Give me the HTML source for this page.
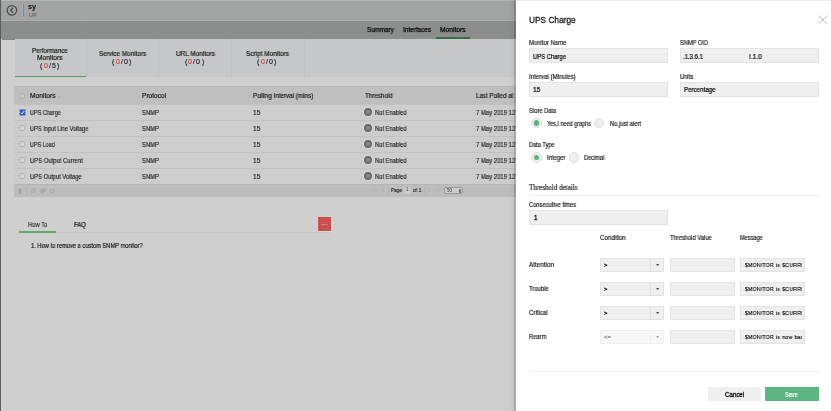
<!DOCTYPE html>
<html><head><meta charset="utf-8">
<style>
*{box-sizing:border-box;margin:0;padding:0}
html,body{width:831px;height:411px;overflow:hidden;background:#cfcfcf;font-family:"Liberation Sans",sans-serif}
.a{position:absolute}
.t{position:absolute;white-space:nowrap;will-change:transform}
</style></head><body>
<div class="a" style="left:0px;top:0px;width:516px;height:411px;background:#cfcfcf;"></div>
<div class="a" style="left:0px;top:0px;width:516px;height:20.5px;background:#a2a4a3;"></div>
<div class="a" style="left:0px;top:0px;width:516px;height:1px;background:#b3b5b4;"></div>
<div class="a" style="left:0px;top:19.6px;width:516px;height:0.9px;background:#acaead;"></div>
<div class="a" style="left:0px;top:20.5px;width:516px;height:18.5px;background:#8c8e8d;"></div>
<div class="a" style="left:0px;top:38.5px;width:516px;height:0.5px;background:#858786;"></div>
<div class="a" style="left:0px;top:0px;width:1px;height:411px;background:#5a5a5a;"></div>
<div class="a" style="left:1px;top:39px;width:1px;height:372px;background:#d9d9d9;"></div>
<svg class="a" style="left:4.5px;top:4px" width="14" height="13" viewBox="0 0 14 13"><circle cx="6.9" cy="6.3" r="5.8" fill="none" stroke="#b4b6b5" stroke-width="0.6"/><circle cx="6.9" cy="6.3" r="4.8" fill="none" stroke="#4a4a4a" stroke-width="1.25"/><path d="M8 3.8 L5.5 6.3 L8 8.8" fill="none" stroke="#4a4a4a" stroke-width="1.25"/></svg>
<div class="a" style="left:21.8px;top:3.5px;width:2.6px;height:14.5px;background:#aab4bc;"></div>
<div class="a" style="left:22.5px;top:4px;width:1.3px;height:13.3px;background:#c17a30;"></div>
<div class="t" style="left:28.4px;top:1.00px;font-size:6.9px;line-height:12px;color:#080808;font-family:'Liberation Sans',sans-serif;font-weight:bold;transform:scaleX(1.0500);transform-origin:0 50%;">sy</div>
<div class="t" style="left:28.6px;top:8.80px;font-size:5.8px;line-height:12px;color:#5a5a5a;font-family:'Liberation Sans',sans-serif;font-weight:normal;-webkit-text-stroke:0.05px #5a5a5a;transform:scaleX(0.9302);transform-origin:0 50%;">UP</div>
<div class="a" style="left:38px;top:17.3px;width:46px;height:0;border-top:0.6px dotted #aaacab"></div>
<div class="t" style="left:367.4px;top:23.80px;font-size:6.6px;line-height:12px;color:#0a0a0a;font-family:'Liberation Sans',sans-serif;font-weight:normal;-webkit-text-stroke:0.25px #0a0a0a;transform:scaleX(0.9426);transform-origin:0 50%;">Summary</div>
<div class="t" style="left:402.8px;top:23.80px;font-size:6.6px;line-height:12px;color:#0a0a0a;font-family:'Liberation Sans',sans-serif;font-weight:normal;-webkit-text-stroke:0.25px #0a0a0a;transform:scaleX(0.9666);transform-origin:0 50%;">Interfaces</div>
<div class="t" style="left:440px;top:23.80px;font-size:6.6px;line-height:12px;color:#0a0a0a;font-family:'Liberation Sans',sans-serif;font-weight:normal;-webkit-text-stroke:0.25px #0a0a0a;transform:scaleX(1.0080);transform-origin:0 50%;">Monitors</div>
<div class="a" style="left:435.5px;top:37.4px;width:34.5px;height:1.2px;background:#3a6c45;"></div>
<div class="a" style="left:14.5px;top:39px;width:501.5px;height:38px;background:#c6c7c8;"></div>
<div class="a" style="left:86px;top:39px;width:0.8px;height:38px;background:#c0c0c0;"></div>
<div class="a" style="left:158.4px;top:39px;width:0.8px;height:38px;background:#c0c0c0;"></div>
<div class="a" style="left:231px;top:39px;width:0.8px;height:38px;background:#c0c0c0;"></div>
<div class="a" style="left:303.5px;top:39px;width:0.8px;height:38px;background:#c0c0c0;"></div>
<div class="a" style="left:14.5px;top:75.9px;width:71.5px;height:1.4px;background:#5c9d6c;"></div>
<div class="a" style="left:14.5px;top:77.3px;width:71.5px;height:0.5px;background:#d2c6c6;"></div>
<div class="t" style="left:32.1px;top:44.50px;font-size:6.7px;line-height:12px;color:#161616;font-family:'Liberation Sans',sans-serif;font-weight:normal;-webkit-text-stroke:0.18px #161616;transform:scaleX(0.9348);transform-origin:0 50%;">Performance</div>
<div class="t" style="left:37.2px;top:51.90px;font-size:6.7px;line-height:12px;color:#161616;font-family:'Liberation Sans',sans-serif;font-weight:normal;-webkit-text-stroke:0.18px #161616;transform:scaleX(0.9939);transform-origin:0 50%;">Monitors</div>
<div class="t" style="left:40.25px;top:59.60px;font-size:7.0px;line-height:12px;color:#161616;font-family:'Liberation Sans',sans-serif;font-weight:normal;-webkit-text-stroke:0.12px #161616;">(</div>
<div class="t" style="left:43.55px;top:59.60px;font-size:7.0px;line-height:12px;color:#d23a2e;font-family:'Liberation Sans',sans-serif;font-weight:normal;-webkit-text-stroke:0.12px #d23a2e;">0</div>
<div class="t" style="left:48.65px;top:59.60px;font-size:7.0px;line-height:12px;color:#161616;font-family:'Liberation Sans',sans-serif;font-weight:normal;-webkit-text-stroke:0.12px #161616;">/</div>
<div class="t" style="left:51.75px;top:59.60px;font-size:7.0px;line-height:12px;color:#161616;font-family:'Liberation Sans',sans-serif;font-weight:normal;-webkit-text-stroke:0.12px #161616;">5</div>
<div class="t" style="left:56.949999999999996px;top:59.60px;font-size:7.0px;line-height:12px;color:#161616;font-family:'Liberation Sans',sans-serif;font-weight:normal;-webkit-text-stroke:0.12px #161616;">)</div>
<div class="t" style="left:98.7px;top:48.10px;font-size:6.7px;line-height:12px;color:#161616;font-family:'Liberation Sans',sans-serif;font-weight:normal;-webkit-text-stroke:0.18px #161616;transform:scaleX(0.9455);transform-origin:0 50%;">Service Monitors</div>
<div class="t" style="left:112.39999999999999px;top:55.80px;font-size:7.0px;line-height:12px;color:#161616;font-family:'Liberation Sans',sans-serif;font-weight:normal;-webkit-text-stroke:0.12px #161616;">(</div>
<div class="t" style="left:115.7px;top:55.80px;font-size:7.0px;line-height:12px;color:#d23a2e;font-family:'Liberation Sans',sans-serif;font-weight:normal;-webkit-text-stroke:0.12px #d23a2e;">0</div>
<div class="t" style="left:120.8px;top:55.80px;font-size:7.0px;line-height:12px;color:#161616;font-family:'Liberation Sans',sans-serif;font-weight:normal;-webkit-text-stroke:0.12px #161616;">/</div>
<div class="t" style="left:123.89999999999999px;top:55.80px;font-size:7.0px;line-height:12px;color:#161616;font-family:'Liberation Sans',sans-serif;font-weight:normal;-webkit-text-stroke:0.12px #161616;">0</div>
<div class="t" style="left:129.1px;top:55.80px;font-size:7.0px;line-height:12px;color:#161616;font-family:'Liberation Sans',sans-serif;font-weight:normal;-webkit-text-stroke:0.12px #161616;">)</div>
<div class="t" style="left:175.7px;top:48.30px;font-size:6.7px;line-height:12px;color:#161616;font-family:'Liberation Sans',sans-serif;font-weight:normal;-webkit-text-stroke:0.18px #161616;transform:scaleX(0.9596);transform-origin:0 50%;">URL Monitors</div>
<div class="t" style="left:184.95px;top:55.80px;font-size:7.0px;line-height:12px;color:#161616;font-family:'Liberation Sans',sans-serif;font-weight:normal;-webkit-text-stroke:0.12px #161616;">(</div>
<div class="t" style="left:188.25px;top:55.80px;font-size:7.0px;line-height:12px;color:#d23a2e;font-family:'Liberation Sans',sans-serif;font-weight:normal;-webkit-text-stroke:0.12px #d23a2e;">0</div>
<div class="t" style="left:193.35px;top:55.80px;font-size:7.0px;line-height:12px;color:#161616;font-family:'Liberation Sans',sans-serif;font-weight:normal;-webkit-text-stroke:0.12px #161616;">/</div>
<div class="t" style="left:196.45px;top:55.80px;font-size:7.0px;line-height:12px;color:#161616;font-family:'Liberation Sans',sans-serif;font-weight:normal;-webkit-text-stroke:0.12px #161616;">0</div>
<div class="t" style="left:201.65px;top:55.80px;font-size:7.0px;line-height:12px;color:#161616;font-family:'Liberation Sans',sans-serif;font-weight:normal;-webkit-text-stroke:0.12px #161616;">)</div>
<div class="t" style="left:246px;top:48.30px;font-size:6.7px;line-height:12px;color:#161616;font-family:'Liberation Sans',sans-serif;font-weight:normal;-webkit-text-stroke:0.18px #161616;transform:scaleX(0.9639);transform-origin:0 50%;">Script Monitors</div>
<div class="t" style="left:257.35px;top:55.80px;font-size:7.0px;line-height:12px;color:#161616;font-family:'Liberation Sans',sans-serif;font-weight:normal;-webkit-text-stroke:0.12px #161616;">(</div>
<div class="t" style="left:260.65px;top:55.80px;font-size:7.0px;line-height:12px;color:#d23a2e;font-family:'Liberation Sans',sans-serif;font-weight:normal;-webkit-text-stroke:0.12px #d23a2e;">0</div>
<div class="t" style="left:265.75px;top:55.80px;font-size:7.0px;line-height:12px;color:#161616;font-family:'Liberation Sans',sans-serif;font-weight:normal;-webkit-text-stroke:0.12px #161616;">/</div>
<div class="t" style="left:268.85px;top:55.80px;font-size:7.0px;line-height:12px;color:#161616;font-family:'Liberation Sans',sans-serif;font-weight:normal;-webkit-text-stroke:0.12px #161616;">0</div>
<div class="t" style="left:274.05px;top:55.80px;font-size:7.0px;line-height:12px;color:#161616;font-family:'Liberation Sans',sans-serif;font-weight:normal;-webkit-text-stroke:0.12px #161616;">)</div>
<div class="a" style="left:14px;top:86px;width:502px;height:18.2px;background:#bfbfbf;"></div>
<div class="a" style="left:14px;top:85.6px;width:502px;height:0.9px;background:#b8b8b8;"></div>
<div class="a" style="left:14px;top:103.6px;width:502px;height:0.8px;background:#b9b9b9;"></div>
<div class="a" style="left:19.2px;top:93.3px;width:5.8px;height:5.8px;border-radius:2px;background:#c6c6c6;border:0.7px solid #b0b0b0"></div>
<div class="t" style="left:30.4px;top:89.80px;font-size:6.6px;line-height:12px;color:#161616;font-family:'Liberation Sans',sans-serif;font-weight:normal;-webkit-text-stroke:0.18px #161616;transform:scaleX(1.0120);transform-origin:0 50%;">Monitors</div>
<svg class="a" style="left:58.3px;top:94.6px" width="3" height="3" viewBox="0 0 3 3"><path d="M0.3 2.4 L1.5 0.9 L2.7 2.4Z" fill="#9c9c9c"/></svg>
<div class="t" style="left:141.8px;top:89.60px;font-size:6.6px;line-height:12px;color:#161616;font-family:'Liberation Sans',sans-serif;font-weight:normal;-webkit-text-stroke:0.18px #161616;transform:scaleX(0.9957);transform-origin:0 50%;">Protocol</div>
<div class="t" style="left:252.9px;top:89.60px;font-size:6.6px;line-height:12px;color:#161616;font-family:'Liberation Sans',sans-serif;font-weight:normal;-webkit-text-stroke:0.18px #161616;transform:scaleX(0.9494);transform-origin:0 50%;">Polling Interval (mins)</div>
<div class="t" style="left:364.5px;top:89.60px;font-size:6.6px;line-height:12px;color:#161616;font-family:'Liberation Sans',sans-serif;font-weight:normal;-webkit-text-stroke:0.18px #161616;transform:scaleX(0.9411);transform-origin:0 50%;">Threshold</div>
<div class="t" style="left:475.6px;top:89.60px;font-size:6.6px;line-height:12px;color:#161616;font-family:'Liberation Sans',sans-serif;font-weight:normal;-webkit-text-stroke:0.18px #161616;transform:scaleX(0.9357);transform-origin:0 50%;">Last Polled at</div>
<div class="a" style="left:14px;top:104.2px;width:502px;height:16px;background:#cdcdcd;"></div>
<div class="a" style="left:14px;top:104.2px;width:502px;height:0.8px;background:#c2c2c2;"></div>
<svg class="a" style="left:18.6px;top:109.3px" width="7" height="7" viewBox="0 0 7 7"><rect x="0.35" y="0.35" width="6.3" height="6.3" rx="1.2" fill="#2d5cc2" stroke="#cdbf98" stroke-width="0.5"/><path d="M1.7 3.5 L3 4.8 L5.3 2" fill="none" stroke="#fff" stroke-width="0.9"/></svg>
<div class="t" style="left:30.4px;top:106.50px;font-size:6.6px;line-height:12px;color:#161616;font-family:'Liberation Sans',sans-serif;font-weight:normal;-webkit-text-stroke:0.12px #161616;transform:scaleX(0.8317);transform-origin:0 50%;">UPS Charge</div>
<div class="t" style="left:141.8px;top:106.50px;font-size:6.6px;line-height:12px;color:#161616;font-family:'Liberation Sans',sans-serif;font-weight:normal;-webkit-text-stroke:0.12px #161616;transform:scaleX(0.8813);transform-origin:0 50%;">SNMP</div>
<div class="t" style="left:252.9px;top:106.50px;font-size:6.6px;line-height:12px;color:#161616;font-family:'Liberation Sans',sans-serif;font-weight:normal;-webkit-text-stroke:0.12px #161616;transform:scaleX(0.9940);transform-origin:0 50%;">15</div>
<svg class="a" style="left:363.2px;top:107.2px" width="10" height="10" viewBox="0 0 10 10"><circle cx="5" cy="5" r="4.9" fill="#dedede" opacity="0.6"/><circle cx="5" cy="5" r="3.9" fill="#5e5e5e"/><circle cx="5" cy="5" r="2.6" fill="#8e8e8e"/><circle cx="5" cy="5" r="1.9" fill="none" stroke="#6a6a6a" stroke-width="0.7"/><circle cx="5" cy="5" r="0.8" fill="#999"/></svg>
<div class="t" style="left:374.5px;top:106.50px;font-size:6.6px;line-height:12px;color:#161616;font-family:'Liberation Sans',sans-serif;font-weight:normal;-webkit-text-stroke:0.12px #161616;transform:scaleX(0.8706);transform-origin:0 50%;">Not Enabled</div>
<div class="t" style="left:475.6px;top:106.50px;font-size:6.6px;line-height:12px;color:#161616;font-family:'Liberation Sans',sans-serif;font-weight:normal;-webkit-text-stroke:0.12px #161616;transform:scaleX(0.9000);transform-origin:0 50%;">7 May 2019 12:38 PM</div>
<div class="a" style="left:14px;top:120.2px;width:502px;height:16px;background:#cdcdcd;"></div>
<div class="a" style="left:14px;top:120.2px;width:502px;height:0.8px;background:#c2c2c2;"></div>
<div class="a" style="left:18.9px;top:125.3px;width:6.2px;height:6.2px;border-radius:1.4px;background:#d3d3d3;border:0.8px solid #b4b4b4"></div>
<div class="t" style="left:30.4px;top:122.50px;font-size:6.6px;line-height:12px;color:#161616;font-family:'Liberation Sans',sans-serif;font-weight:normal;-webkit-text-stroke:0.12px #161616;transform:scaleX(0.8565);transform-origin:0 50%;">UPS Input Line Voltage</div>
<div class="t" style="left:141.8px;top:122.50px;font-size:6.6px;line-height:12px;color:#161616;font-family:'Liberation Sans',sans-serif;font-weight:normal;-webkit-text-stroke:0.12px #161616;transform:scaleX(0.8813);transform-origin:0 50%;">SNMP</div>
<div class="t" style="left:252.9px;top:122.50px;font-size:6.6px;line-height:12px;color:#161616;font-family:'Liberation Sans',sans-serif;font-weight:normal;-webkit-text-stroke:0.12px #161616;transform:scaleX(0.9940);transform-origin:0 50%;">15</div>
<svg class="a" style="left:363.2px;top:123.2px" width="10" height="10" viewBox="0 0 10 10"><circle cx="5" cy="5" r="4.9" fill="#dedede" opacity="0.6"/><circle cx="5" cy="5" r="3.9" fill="#5e5e5e"/><circle cx="5" cy="5" r="2.6" fill="#8e8e8e"/><circle cx="5" cy="5" r="1.9" fill="none" stroke="#6a6a6a" stroke-width="0.7"/><circle cx="5" cy="5" r="0.8" fill="#999"/></svg>
<div class="t" style="left:374.5px;top:122.50px;font-size:6.6px;line-height:12px;color:#161616;font-family:'Liberation Sans',sans-serif;font-weight:normal;-webkit-text-stroke:0.12px #161616;transform:scaleX(0.8706);transform-origin:0 50%;">Not Enabled</div>
<div class="t" style="left:475.6px;top:122.50px;font-size:6.6px;line-height:12px;color:#161616;font-family:'Liberation Sans',sans-serif;font-weight:normal;-webkit-text-stroke:0.12px #161616;transform:scaleX(0.9000);transform-origin:0 50%;">7 May 2019 12:38 PM</div>
<div class="a" style="left:14px;top:136.2px;width:502px;height:16px;background:#cdcdcd;"></div>
<div class="a" style="left:14px;top:136.2px;width:502px;height:0.8px;background:#c2c2c2;"></div>
<div class="a" style="left:18.9px;top:141.29999999999998px;width:6.2px;height:6.2px;border-radius:1.4px;background:#d3d3d3;border:0.8px solid #b4b4b4"></div>
<div class="t" style="left:30.4px;top:138.50px;font-size:6.6px;line-height:12px;color:#161616;font-family:'Liberation Sans',sans-serif;font-weight:normal;-webkit-text-stroke:0.12px #161616;transform:scaleX(0.8216);transform-origin:0 50%;">UPS Load</div>
<div class="t" style="left:141.8px;top:138.50px;font-size:6.6px;line-height:12px;color:#161616;font-family:'Liberation Sans',sans-serif;font-weight:normal;-webkit-text-stroke:0.12px #161616;transform:scaleX(0.8813);transform-origin:0 50%;">SNMP</div>
<div class="t" style="left:252.9px;top:138.50px;font-size:6.6px;line-height:12px;color:#161616;font-family:'Liberation Sans',sans-serif;font-weight:normal;-webkit-text-stroke:0.12px #161616;transform:scaleX(0.9940);transform-origin:0 50%;">15</div>
<svg class="a" style="left:363.2px;top:139.2px" width="10" height="10" viewBox="0 0 10 10"><circle cx="5" cy="5" r="4.9" fill="#dedede" opacity="0.6"/><circle cx="5" cy="5" r="3.9" fill="#5e5e5e"/><circle cx="5" cy="5" r="2.6" fill="#8e8e8e"/><circle cx="5" cy="5" r="1.9" fill="none" stroke="#6a6a6a" stroke-width="0.7"/><circle cx="5" cy="5" r="0.8" fill="#999"/></svg>
<div class="t" style="left:374.5px;top:138.50px;font-size:6.6px;line-height:12px;color:#161616;font-family:'Liberation Sans',sans-serif;font-weight:normal;-webkit-text-stroke:0.12px #161616;transform:scaleX(0.8706);transform-origin:0 50%;">Not Enabled</div>
<div class="t" style="left:475.6px;top:138.50px;font-size:6.6px;line-height:12px;color:#161616;font-family:'Liberation Sans',sans-serif;font-weight:normal;-webkit-text-stroke:0.12px #161616;transform:scaleX(0.9000);transform-origin:0 50%;">7 May 2019 12:38 PM</div>
<div class="a" style="left:14px;top:152.2px;width:502px;height:16px;background:#cdcdcd;"></div>
<div class="a" style="left:14px;top:152.2px;width:502px;height:0.8px;background:#c2c2c2;"></div>
<div class="a" style="left:18.9px;top:157.29999999999998px;width:6.2px;height:6.2px;border-radius:1.4px;background:#d3d3d3;border:0.8px solid #b4b4b4"></div>
<div class="t" style="left:30.4px;top:154.50px;font-size:6.6px;line-height:12px;color:#161616;font-family:'Liberation Sans',sans-serif;font-weight:normal;-webkit-text-stroke:0.12px #161616;transform:scaleX(0.8930);transform-origin:0 50%;">UPS Output Current</div>
<div class="t" style="left:141.8px;top:154.50px;font-size:6.6px;line-height:12px;color:#161616;font-family:'Liberation Sans',sans-serif;font-weight:normal;-webkit-text-stroke:0.12px #161616;transform:scaleX(0.8813);transform-origin:0 50%;">SNMP</div>
<div class="t" style="left:252.9px;top:154.50px;font-size:6.6px;line-height:12px;color:#161616;font-family:'Liberation Sans',sans-serif;font-weight:normal;-webkit-text-stroke:0.12px #161616;transform:scaleX(0.9940);transform-origin:0 50%;">15</div>
<svg class="a" style="left:363.2px;top:155.2px" width="10" height="10" viewBox="0 0 10 10"><circle cx="5" cy="5" r="4.9" fill="#dedede" opacity="0.6"/><circle cx="5" cy="5" r="3.9" fill="#5e5e5e"/><circle cx="5" cy="5" r="2.6" fill="#8e8e8e"/><circle cx="5" cy="5" r="1.9" fill="none" stroke="#6a6a6a" stroke-width="0.7"/><circle cx="5" cy="5" r="0.8" fill="#999"/></svg>
<div class="t" style="left:374.5px;top:154.50px;font-size:6.6px;line-height:12px;color:#161616;font-family:'Liberation Sans',sans-serif;font-weight:normal;-webkit-text-stroke:0.12px #161616;transform:scaleX(0.8706);transform-origin:0 50%;">Not Enabled</div>
<div class="t" style="left:475.6px;top:154.50px;font-size:6.6px;line-height:12px;color:#161616;font-family:'Liberation Sans',sans-serif;font-weight:normal;-webkit-text-stroke:0.12px #161616;transform:scaleX(0.9000);transform-origin:0 50%;">7 May 2019 12:38 PM</div>
<div class="a" style="left:14px;top:168.2px;width:502px;height:16px;background:#cdcdcd;"></div>
<div class="a" style="left:14px;top:168.2px;width:502px;height:0.8px;background:#c2c2c2;"></div>
<div class="a" style="left:18.9px;top:173.29999999999998px;width:6.2px;height:6.2px;border-radius:1.4px;background:#d3d3d3;border:0.8px solid #b4b4b4"></div>
<div class="t" style="left:30.4px;top:170.50px;font-size:6.6px;line-height:12px;color:#161616;font-family:'Liberation Sans',sans-serif;font-weight:normal;-webkit-text-stroke:0.12px #161616;transform:scaleX(0.8760);transform-origin:0 50%;">UPS Output Voltage</div>
<div class="t" style="left:141.8px;top:170.50px;font-size:6.6px;line-height:12px;color:#161616;font-family:'Liberation Sans',sans-serif;font-weight:normal;-webkit-text-stroke:0.12px #161616;transform:scaleX(0.8813);transform-origin:0 50%;">SNMP</div>
<div class="t" style="left:252.9px;top:170.50px;font-size:6.6px;line-height:12px;color:#161616;font-family:'Liberation Sans',sans-serif;font-weight:normal;-webkit-text-stroke:0.12px #161616;transform:scaleX(0.9940);transform-origin:0 50%;">15</div>
<svg class="a" style="left:363.2px;top:171.2px" width="10" height="10" viewBox="0 0 10 10"><circle cx="5" cy="5" r="4.9" fill="#dedede" opacity="0.6"/><circle cx="5" cy="5" r="3.9" fill="#5e5e5e"/><circle cx="5" cy="5" r="2.6" fill="#8e8e8e"/><circle cx="5" cy="5" r="1.9" fill="none" stroke="#6a6a6a" stroke-width="0.7"/><circle cx="5" cy="5" r="0.8" fill="#999"/></svg>
<div class="t" style="left:374.5px;top:170.50px;font-size:6.6px;line-height:12px;color:#161616;font-family:'Liberation Sans',sans-serif;font-weight:normal;-webkit-text-stroke:0.12px #161616;transform:scaleX(0.8706);transform-origin:0 50%;">Not Enabled</div>
<div class="t" style="left:475.6px;top:170.50px;font-size:6.6px;line-height:12px;color:#161616;font-family:'Liberation Sans',sans-serif;font-weight:normal;-webkit-text-stroke:0.12px #161616;transform:scaleX(0.9000);transform-origin:0 50%;">7 May 2019 12:38 PM</div>
<div class="a" style="left:14px;top:184.2px;width:502px;height:13.1px;background:#bdbdbd;"></div>
<div class="a" style="left:14px;top:184.2px;width:502px;height:0.6px;background:#b6b6b6;"></div>
<svg class="a" style="left:14px;top:184px" width="45" height="14" viewBox="0 0 45 14"><rect x="4.6" y="4.4" width="3" height="5.6" rx="1.2" fill="#a6a6a6"/><line x1="12.6" y1="2.5" x2="12.6" y2="11.5" stroke="#b2b2b2" stroke-width="0.5"/><g fill="none" stroke="#a3a3a3" stroke-width="1"><circle cx="19.6" cy="6.6" r="1.8"/><line x1="18.3" y1="8" x2="16.8" y2="9.6"/><circle cx="28" cy="7.6" r="1.6"/><circle cx="29.6" cy="6.4" r="1.6"/><circle cx="38.5" cy="7" r="1.9"/></g></svg>
<svg class="a" style="left:372px;top:187px" width="70" height="7" viewBox="0 0 70 7"><g fill="none" stroke="#ababab" stroke-width="0.6"><path d="M2 1.8 V5.2 M4.6 1.8 L3 3.5 L4.6 5.2"/><path d="M11.2 1.8 L9.6 3.5 L11.2 5.2 M13.2 1.8 L11.6 3.5 L13.2 5.2"/><path d="M55 1.8 L56.6 3.5 L55 5.2 M57 1.8 L58.6 3.5 L57 5.2"/><path d="M64.4 1.8 L66 3.5 L64.4 5.2 M67.4 1.8 V5.2"/></g></svg>
<div class="a" style="left:388px;top:186.5px;width:0.6px;height:8px;background:#b4b4b4;"></div>
<div class="t" style="left:390.8px;top:184.40px;font-size:5.8px;line-height:12px;color:#1e1e1e;font-family:'Liberation Sans',sans-serif;font-weight:normal;-webkit-text-stroke:0.1px #1e1e1e;transform:scaleX(0.8268);transform-origin:0 50%;">Page</div>
<div class="a" style="left:403.6px;top:187.2px;width:7.2px;height:6.6px;border-radius:1px;background:#cbcbcb"></div>
<div class="t" style="left:406.3px;top:184.40px;font-size:4.6px;line-height:12px;color:#4a4a4a;font-family:'Liberation Sans',sans-serif;font-weight:normal;">1</div>
<div class="t" style="left:413px;top:184.40px;font-size:5.8px;line-height:12px;color:#1e1e1e;font-family:'Liberation Sans',sans-serif;font-weight:normal;-webkit-text-stroke:0.1px #1e1e1e;transform:scaleX(0.8582);transform-origin:0 50%;">of 1</div>
<div class="a" style="left:424px;top:186.5px;width:0.6px;height:8px;background:#b4b4b4;"></div>
<div class="a" style="left:443.8px;top:186.6px;width:19px;height:7.8px;border-radius:2px;background:#cdcdcd;border:0.7px solid #9a9a9a"></div>
<div class="t" style="left:446.8px;top:184.50px;font-size:4.6px;line-height:12px;color:#333;font-family:'Liberation Sans',sans-serif;font-weight:normal;">50</div>
<svg class="a" style="left:457.6px;top:187.6px" width="4" height="6" viewBox="0 0 4 6"><path d="M0.7 2.6 L2 1 L3.3 2.6 Z M0.7 3.4 L2 5 L3.3 3.4 Z" fill="#1a1a1a"/></svg>
<div class="a" style="left:14px;top:232.2px;width:317px;height:0.9px;background:#c6c6c6;"></div>
<div class="a" style="left:18.7px;top:231.4px;width:37.6px;height:1.2px;background:#66a575;"></div>
<div class="t" style="left:28px;top:218.50px;font-size:6.4px;line-height:12px;color:#161616;font-family:'Liberation Sans',sans-serif;font-weight:normal;-webkit-text-stroke:0.08px #161616;transform:scaleX(0.9055);transform-origin:0 50%;">How To</div>
<div class="t" style="left:74.2px;top:218.50px;font-size:6.4px;line-height:12px;color:#161616;font-family:'Liberation Sans',sans-serif;font-weight:normal;-webkit-text-stroke:0.22px #161616;transform:scaleX(0.9299);transform-origin:0 50%;">FAQ</div>
<div class="t" style="left:30.8px;top:240.00px;font-size:6.4px;line-height:12px;color:#0e0e0e;font-family:'Liberation Sans',sans-serif;font-weight:normal;-webkit-text-stroke:0.15px #0e0e0e;transform:scaleX(0.8977);transform-origin:0 50%;">1. How to remove a custom SNMP monitor?</div>
<div class="a" style="left:317px;top:216.5px;width:15px;height:15.2px;background:#d2dada;"></div>
<div class="a" style="left:318px;top:217.3px;width:13.2px;height:13.8px;background:#c84f4c;"></div>
<div class="a" style="left:321.2px;top:224.1px;width:6.6px;height:0.7px;background:#d47f7d;"></div>
<div class="a" style="left:508px;top:0;width:6.5px;height:411px;background:linear-gradient(to right,rgba(0,0,0,0),rgba(0,0,0,0.05))"></div>
<div class="a" style="left:514.3px;top:0;width:1.5px;height:411px;background:rgba(0,0,0,0.16)"></div>
<div class="a" style="left:515.6px;top:0px;width:315.5px;height:411px;background:#ffffff;"></div>
<div class="a" style="left:515.6px;top:0px;width:315.5px;height:0.8px;background:#ececec;"></div>
<div class="t" style="left:529.4px;top:14.00px;font-size:9.6px;line-height:12px;color:#111;font-family:'Liberation Sans',sans-serif;font-weight:normal;-webkit-text-stroke:0.3px #111;transform:scaleX(0.8652);transform-origin:0 50%;">UPS Charge</div>
<svg class="a" style="left:817.7px;top:14.8px" width="10" height="9.5" viewBox="0 0 10 9.5"><path d="M0.6 0.5 L9.2 8.9 M9.2 0.5 L0.6 8.9" stroke="#a0a0a0" stroke-width="0.75"/></svg>
<div class="t" style="left:529.2px;top:37.10px;font-size:6.3px;line-height:12px;color:#111111;font-family:'Liberation Sans',sans-serif;font-weight:normal;-webkit-text-stroke:0.15px #111111;transform:scaleX(0.9457);transform-origin:0 50%;">Monitor Name</div>
<div class="a" style="left:529.2px;top:48.2px;width:139.2px;height:15.2px;background:#efefef;border:0.7px solid #e3e3e3"></div>
<div class="t" style="left:533.1px;top:51.00px;font-size:6.8px;line-height:12px;color:#0a0a0a;font-family:'Liberation Sans',sans-serif;font-weight:normal;-webkit-text-stroke:0.22px #0a0a0a;transform:scaleX(0.8649);transform-origin:0 50%;">UPS Charge</div>
<div class="t" style="left:680.2px;top:37.10px;font-size:6.3px;line-height:12px;color:#111111;font-family:'Liberation Sans',sans-serif;font-weight:normal;-webkit-text-stroke:0.15px #111111;transform:scaleX(0.9055);transform-origin:0 50%;">SNMP OID</div>
<div class="a" style="left:680.2px;top:48.3px;width:138.8px;height:14.9px;background:#efefef;border:0.7px solid #e3e3e3"></div>
<div class="t" style="left:683.3px;top:51.00px;font-size:6.8px;line-height:12px;color:#0a0a0a;font-family:'Liberation Sans',sans-serif;font-weight:normal;-webkit-text-stroke:0.22px #0a0a0a;transform:scaleX(0.8771);transform-origin:0 50%;">.1.3.6.1</div>
<div class="t" style="left:749.2px;top:51.00px;font-size:6.8px;line-height:12px;color:#0a0a0a;font-family:'Liberation Sans',sans-serif;font-weight:normal;-webkit-text-stroke:0.22px #0a0a0a;transform:scaleX(0.9672);transform-origin:0 50%;">!.1.0</div>
<div class="t" style="left:529.2px;top:71.30px;font-size:6.3px;line-height:12px;color:#111111;font-family:'Liberation Sans',sans-serif;font-weight:normal;-webkit-text-stroke:0.15px #111111;transform:scaleX(0.9598);transform-origin:0 50%;">Interval (Minutes)</div>
<div class="a" style="left:529.2px;top:82.2px;width:139.2px;height:14.8px;background:#efefef;border:0.7px solid #e3e3e3"></div>
<div class="t" style="left:533.1px;top:84.00px;font-size:6.8px;line-height:12px;color:#0a0a0a;font-family:'Liberation Sans',sans-serif;font-weight:normal;-webkit-text-stroke:0.22px #0a0a0a;transform:scaleX(0.9653);transform-origin:0 50%;">15</div>
<div class="t" style="left:680.2px;top:71.30px;font-size:6.3px;line-height:12px;color:#111111;font-family:'Liberation Sans',sans-serif;font-weight:normal;-webkit-text-stroke:0.15px #111111;transform:scaleX(0.9262);transform-origin:0 50%;">Units</div>
<div class="a" style="left:680.2px;top:82.3px;width:138.8px;height:14.4px;background:#efefef;border:0.7px solid #e3e3e3"></div>
<div class="t" style="left:684px;top:84.10px;font-size:6.8px;line-height:12px;color:#0a0a0a;font-family:'Liberation Sans',sans-serif;font-weight:normal;-webkit-text-stroke:0.22px #0a0a0a;transform:scaleX(0.9061);transform-origin:0 50%;">Percentage</div>
<div class="t" style="left:529.4px;top:104.90px;font-size:6.3px;line-height:12px;color:#111111;font-family:'Liberation Sans',sans-serif;font-weight:normal;-webkit-text-stroke:0.15px #111111;transform:scaleX(0.9034);transform-origin:0 50%;">Store Data</div>
<div class="a" style="left:531.3px;top:117.8px;width:10.4px;height:10.4px;border-radius:50%;background:#efefef;border:0.7px solid #dedede"></div>
<div class="a" style="left:533.9px;top:120.4px;width:5.2px;height:5.2px;border-radius:50%;background:#5bb57a"></div>
<div class="t" style="left:547.3px;top:117.60px;font-size:6.3px;line-height:12px;color:#111111;font-family:'Liberation Sans',sans-serif;font-weight:normal;-webkit-text-stroke:0.15px #111111;transform:scaleX(0.8685);transform-origin:0 50%;">Yes,I need graphs</div>
<div class="a" style="left:594.0px;top:117.8px;width:10.4px;height:10.4px;border-radius:50%;background:#efefef;border:0.7px solid #dedede"></div>
<div class="t" style="left:609.8px;top:117.60px;font-size:6.3px;line-height:12px;color:#111111;font-family:'Liberation Sans',sans-serif;font-weight:normal;-webkit-text-stroke:0.15px #111111;transform:scaleX(0.9283);transform-origin:0 50%;">No,just alert</div>
<div class="t" style="left:529.4px;top:139.30px;font-size:6.3px;line-height:12px;color:#111111;font-family:'Liberation Sans',sans-serif;font-weight:normal;-webkit-text-stroke:0.15px #111111;transform:scaleX(0.8953);transform-origin:0 50%;">Data Type</div>
<div class="a" style="left:531.3px;top:152.20000000000002px;width:10.4px;height:10.4px;border-radius:50%;background:#efefef;border:0.7px solid #dedede"></div>
<div class="a" style="left:533.9px;top:154.8px;width:5.2px;height:5.2px;border-radius:50%;background:#5bb57a"></div>
<div class="t" style="left:547.3px;top:152.00px;font-size:6.3px;line-height:12px;color:#111111;font-family:'Liberation Sans',sans-serif;font-weight:normal;-webkit-text-stroke:0.15px #111111;transform:scaleX(0.9383);transform-origin:0 50%;">Integer</div>
<div class="a" style="left:568.8px;top:152.20000000000002px;width:10.4px;height:10.4px;border-radius:50%;background:#efefef;border:0.7px solid #dedede"></div>
<div class="t" style="left:584.4px;top:152.00px;font-size:6.3px;line-height:12px;color:#111111;font-family:'Liberation Sans',sans-serif;font-weight:normal;-webkit-text-stroke:0.15px #111111;transform:scaleX(0.8967);transform-origin:0 50%;">Decimal</div>
<div class="t" style="left:529.4px;top:181.90px;font-size:7.5px;line-height:12px;color:#151515;font-family:'Liberation Serif',serif;font-weight:normal;-webkit-text-stroke:0.15px #151515;transform:scaleX(0.9330);transform-origin:0 50%;">Threshold details</div>
<div class="a" style="left:529.6px;top:194.6px;width:290px;height:0.8px;background:#ebebeb;"></div>
<div class="t" style="left:529.2px;top:198.50px;font-size:6.3px;line-height:12px;color:#111111;font-family:'Liberation Sans',sans-serif;font-weight:normal;-webkit-text-stroke:0.15px #111111;transform:scaleX(0.9154);transform-origin:0 50%;">Consecutive times</div>
<div class="a" style="left:529.2px;top:210px;width:138.8px;height:14.6px;background:#efefef;border:0.7px solid #e3e3e3"></div>
<div class="t" style="left:533.5px;top:211.90px;font-size:6.5px;line-height:12px;color:#0a0a0a;font-family:'Liberation Sans',sans-serif;font-weight:normal;-webkit-text-stroke:0.35px #0a0a0a;transform:scaleX(0.9000);transform-origin:0 50%;">1</div>
<div class="t" style="left:599.6px;top:231.70px;font-size:6.3px;line-height:12px;color:#111111;font-family:'Liberation Sans',sans-serif;font-weight:normal;-webkit-text-stroke:0.15px #111111;transform:scaleX(0.9696);transform-origin:0 50%;">Condition</div>
<div class="t" style="left:670.3px;top:231.70px;font-size:6.3px;line-height:12px;color:#111111;font-family:'Liberation Sans',sans-serif;font-weight:normal;-webkit-text-stroke:0.15px #111111;transform:scaleX(0.9165);transform-origin:0 50%;">Threshold Value</div>
<div class="t" style="left:740.2px;top:231.70px;font-size:6.3px;line-height:12px;color:#111111;font-family:'Liberation Sans',sans-serif;font-weight:normal;-webkit-text-stroke:0.15px #111111;transform:scaleX(0.8880);transform-origin:0 50%;">Message</div>
<div class="t" style="left:529.2px;top:258.90px;font-size:6.3px;line-height:12px;color:#111111;font-family:'Liberation Sans',sans-serif;font-weight:normal;-webkit-text-stroke:0.15px #111111;transform:scaleX(1.0097);transform-origin:0 50%;">Attention</div>
<div class="a" style="left:600px;top:257.9px;width:64.3px;height:14.4px;background:#efefef;border:0.7px solid #e3e3e3"></div>
<div class="a" style="left:650.4px;top:258.4px;width:0.8px;height:13.6px;background:#dedede;"></div>
<div class="t" style="left:604px;top:259.00px;font-size:5.8px;line-height:12px;color:#0a0a0a;font-family:'Liberation Sans',sans-serif;font-weight:normal;-webkit-text-stroke:0.3px #0a0a0a;">&gt;</div>
<svg class="a" style="left:655.9px;top:264.2px" width="3.2" height="2.2" viewBox="0 0 3.2 2.2"><path d="M0 0 L3.2 0 L1.6 2.2Z" fill="#555"/></svg>
<div class="a" style="left:670.3px;top:257.9px;width:64.4px;height:14.4px;background:#efefef;border:0.7px solid #e3e3e3"></div>
<div class="a" style="left:740.2px;top:257.9px;width:64.8px;height:14.4px;background:#efefef;border:0.7px solid #e3e3e3"></div>
<div class="a" style="left:741px;top:258.9px;width:61px;height:12.5px;overflow:hidden"><div class="t" style="left:3.60px;top:0.40px;font-size:6.1px;line-height:12px;color:#0a0a0a;font-family:'Liberation Sans',sans-serif;font-weight:normal;-webkit-text-stroke:0.15px #0a0a0a;transform:scaleX(0.8600);transform-origin:0 50%;letter-spacing:0.2px;word-spacing:0.5px;">$MONITOR is $CURRENT</div></div>
<div class="t" style="left:529.2px;top:282.90px;font-size:6.3px;line-height:12px;color:#111111;font-family:'Liberation Sans',sans-serif;font-weight:normal;-webkit-text-stroke:0.15px #111111;transform:scaleX(0.9325);transform-origin:0 50%;">Trouble</div>
<div class="a" style="left:600px;top:281.9px;width:64.3px;height:14.4px;background:#efefef;border:0.7px solid #e3e3e3"></div>
<div class="a" style="left:650.4px;top:282.4px;width:0.8px;height:13.6px;background:#dedede;"></div>
<div class="t" style="left:604px;top:283.00px;font-size:5.8px;line-height:12px;color:#0a0a0a;font-family:'Liberation Sans',sans-serif;font-weight:normal;-webkit-text-stroke:0.3px #0a0a0a;">&gt;</div>
<svg class="a" style="left:655.9px;top:288.2px" width="3.2" height="2.2" viewBox="0 0 3.2 2.2"><path d="M0 0 L3.2 0 L1.6 2.2Z" fill="#555"/></svg>
<div class="a" style="left:670.3px;top:281.9px;width:64.4px;height:14.4px;background:#efefef;border:0.7px solid #e3e3e3"></div>
<div class="a" style="left:740.2px;top:281.9px;width:64.8px;height:14.4px;background:#efefef;border:0.7px solid #e3e3e3"></div>
<div class="a" style="left:741px;top:282.9px;width:61px;height:12.5px;overflow:hidden"><div class="t" style="left:3.60px;top:0.40px;font-size:6.1px;line-height:12px;color:#0a0a0a;font-family:'Liberation Sans',sans-serif;font-weight:normal;-webkit-text-stroke:0.15px #0a0a0a;transform:scaleX(0.8600);transform-origin:0 50%;letter-spacing:0.2px;word-spacing:0.5px;">$MONITOR is $CURRENT</div></div>
<div class="t" style="left:529.2px;top:306.90px;font-size:6.3px;line-height:12px;color:#111111;font-family:'Liberation Sans',sans-serif;font-weight:normal;-webkit-text-stroke:0.15px #111111;transform:scaleX(0.9714);transform-origin:0 50%;">Critical</div>
<div class="a" style="left:600px;top:305.9px;width:64.3px;height:14.4px;background:#efefef;border:0.7px solid #e3e3e3"></div>
<div class="a" style="left:650.4px;top:306.4px;width:0.8px;height:13.6px;background:#dedede;"></div>
<div class="t" style="left:604px;top:307.00px;font-size:5.8px;line-height:12px;color:#0a0a0a;font-family:'Liberation Sans',sans-serif;font-weight:normal;-webkit-text-stroke:0.3px #0a0a0a;">&gt;</div>
<svg class="a" style="left:655.9px;top:312.2px" width="3.2" height="2.2" viewBox="0 0 3.2 2.2"><path d="M0 0 L3.2 0 L1.6 2.2Z" fill="#555"/></svg>
<div class="a" style="left:670.3px;top:305.9px;width:64.4px;height:14.4px;background:#efefef;border:0.7px solid #e3e3e3"></div>
<div class="a" style="left:740.2px;top:305.9px;width:64.8px;height:14.4px;background:#efefef;border:0.7px solid #e3e3e3"></div>
<div class="a" style="left:741px;top:306.9px;width:61px;height:12.5px;overflow:hidden"><div class="t" style="left:3.60px;top:0.40px;font-size:6.1px;line-height:12px;color:#0a0a0a;font-family:'Liberation Sans',sans-serif;font-weight:normal;-webkit-text-stroke:0.15px #0a0a0a;transform:scaleX(0.8600);transform-origin:0 50%;letter-spacing:0.2px;word-spacing:0.5px;">$MONITOR is $CURRENT</div></div>
<div class="t" style="left:529.2px;top:330.90px;font-size:6.3px;line-height:12px;color:#111111;font-family:'Liberation Sans',sans-serif;font-weight:normal;-webkit-text-stroke:0.15px #111111;transform:scaleX(0.9203);transform-origin:0 50%;">Rearm</div>
<div class="a" style="left:600px;top:329.9px;width:64.3px;height:14.4px;background:#f7f7f7;border:0.7px solid #efefef"></div>
<div class="a" style="left:650.4px;top:330.4px;width:0.8px;height:13.6px;background:#eeeeee;"></div>
<div class="t" style="left:603.8px;top:330.50px;font-size:5.8px;line-height:12px;color:#8c8c8c;font-family:'Liberation Sans',sans-serif;font-weight:normal;-webkit-text-stroke:0.25px #8c8c8c;">&lt;=</div>
<svg class="a" style="left:655.9px;top:336.2px" width="3.2" height="2.2" viewBox="0 0 3.2 2.2"><path d="M0 0 L3.2 0 L1.6 2.2Z" fill="#a8a8a8"/></svg>
<div class="a" style="left:670.3px;top:329.9px;width:64.4px;height:14.4px;background:#efefef;border:0.7px solid #e3e3e3"></div>
<div class="a" style="left:740.2px;top:329.9px;width:64.8px;height:14.4px;background:#efefef;border:0.7px solid #e3e3e3"></div>
<div class="a" style="left:741px;top:330.9px;width:61px;height:12.5px;overflow:hidden"><div class="t" style="left:3.60px;top:0.40px;font-size:6.1px;line-height:12px;color:#0a0a0a;font-family:'Liberation Sans',sans-serif;font-weight:normal;-webkit-text-stroke:0.15px #0a0a0a;transform:scaleX(0.8600);transform-origin:0 50%;letter-spacing:0.2px;word-spacing:0.5px;">$MONITOR is now back</div></div>
<div class="a" style="left:529.8000000000001px;top:371.4px;width:289px;height:0.8px;background:#eeeeee;"></div>
<div class="a" style="left:707.7px;top:387px;width:53.8px;height:13.8px;background:#efefef;"></div>
<div class="t" style="left:725px;top:388.90px;font-size:6.8px;line-height:12px;color:#080808;font-family:'Liberation Sans',sans-serif;font-weight:normal;-webkit-text-stroke:0.3px #080808;transform:scaleX(0.9069);transform-origin:0 50%;">Cancel</div>
<div class="a" style="left:764.6px;top:387px;width:54.4px;height:13.8px;background:#5db581;"></div>
<div class="t" style="left:785px;top:388.90px;font-size:6.8px;line-height:12px;color:#ffffff;font-family:'Liberation Sans',sans-serif;font-weight:normal;-webkit-text-stroke:0.2px #ffffff;transform:scaleX(0.8258);transform-origin:0 50%;">Save</div>
</body></html>
